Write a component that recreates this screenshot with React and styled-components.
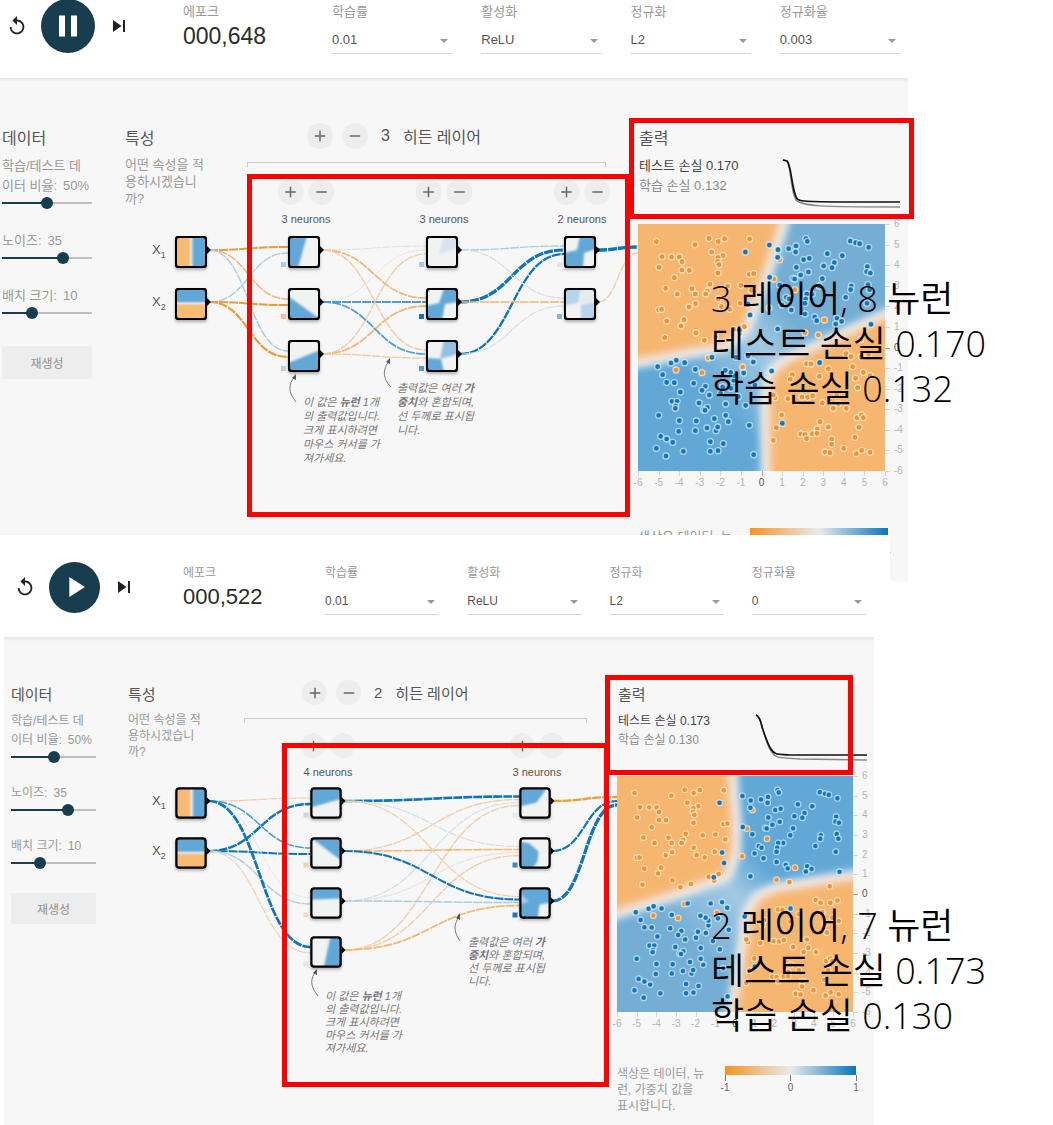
import React, { useState } from "react";
import styled, { createGlobalStyle, ThemeProvider } from "styled-components";
import {
  MdAdd,
  MdPause,
  MdPlayArrow,
  MdRemove,
  MdReplay,
  MdSkipNext,
} from "react-icons/md";

const SANS = '"Liberation Sans", "Noto Sans CJK KR", sans-serif';
const NAVY = "#183d4e";
const BLUE = "#62a8d7";
const ORANGE = "#f8bb74";
const BLANK = "#f1f2f2";

const GlobalStyle = createGlobalStyle`
  *, *::before, *::after { box-sizing: border-box; }
  body { margin: 0; background: #fff; font-family: ${SANS}; color: #555; }
  button, input, select { font-family: inherit; }
`;

/* ---------- sizes of the two captures ---------- */

const wide = {
  panel: 908,
  overlap: 0,
  headPad: "0 8px 24px 5px",
  transport: 178,
  epoch: 149,
  fieldGap: 29,
  play: 54,
  epochFont: 23,
  bodyMargin: "0",
  bodyBottom: 3,
  columns: "125px 513px minmax(0, 1fr)",
  top: 51,
  hiddenTop: 45,
  dataPad: "0 33px 0 2px",
  title: 16,
  font: 13,
  dataLine: 20,
  textLine: 17,
  sliderGap: 20,
  regenTop: 25,
  regenHeight: 33,
  round: 26,
  hiddenLeft: 122,
  hiddenPad: 60,
  bracket: 359,
  noteLine: 14,
  plot: 247,
  lossRow: 68,
  lossWidth: 118,
  outPad: 7,
  legendTop: 57,
  legendColumns: "112px 138px",
};

const narrow = {
  panel: 890,
  overlap: -47,
  headPad: "26px 24px 22px 13px",
  transport: 170,
  epoch: 142,
  fieldGap: 28,
  play: 51,
  epochFont: 22,
  bodyMargin: "0 16px 0 4px",
  bodyBottom: 12,
  columns: "124px 489px minmax(0, 1fr)",
  top: 48,
  hiddenTop: 43,
  dataPad: "0 32px 0 7px",
  title: 15,
  font: 12,
  dataLine: 19,
  textLine: 16,
  sliderGap: 19,
  regenTop: 22,
  regenHeight: 31,
  round: 25,
  hiddenLeft: 116,
  hiddenPad: 58,
  bracket: 343,
  noteLine: 13,
  plot: 236,
  lossRow: 64,
  lossWidth: 112,
  outPad: 6,
  legendTop: 54,
  legendColumns: "108px 131px",
};

/* ---------- page and panels ---------- */

const Page = styled.main`
  position: relative;
  display: flex;
  flex-direction: column;
  overflow: hidden;
`;

const Panel = styled.section`
  position: relative;
  width: 100%;
  max-width: ${({ theme }) => theme.panel}px;
  margin-top: ${({ theme }) => theme.overlap}px;
  background: #fff;
`;

const Header = styled.header`
  display: flex;
  align-items: flex-start;
  padding: ${({ theme }) => theme.headPad};
`;

const Transport = styled.div`
  display: flex;
  align-items: center;
  gap: 12px;
  height: 52px;
  flex: 0 0 ${({ theme }) => theme.transport}px;
`;

const IconButton = styled.button`
  display: grid;
  place-items: center;
  width: 24px;
  height: 24px;
  padding: 0;
  border: 0;
  background: none;
  color: #222;
  cursor: pointer;
`;

const PlayButton = styled(IconButton)`
  flex: none;
  width: ${({ theme }) => theme.play}px;
  height: ${({ theme }) => theme.play}px;
  border-radius: 50%;
  background: ${NAVY};
  color: #fff;
`;

const Epoch = styled.div`
  flex: 0 0 ${({ theme }) => theme.epoch}px;
  padding-top: 3px;
`;

const FieldLabel = styled.label`
  display: block;
  font-size: ${({ theme }) => theme.font}px;
  line-height: 18px;
  color: #999;
`;

const EpochLabel = styled(FieldLabel).attrs({ as: "div" })``;

const EpochValue = styled.div`
  font-size: ${({ theme }) => theme.epochFont}px;
  line-height: 30px;
  color: #2c2c2c;
`;

const Fields = styled.div`
  flex: 1;
  display: grid;
  grid-template-columns: repeat(4, minmax(0, 1fr));
  gap: ${({ theme }) => theme.fieldGap}px;
  padding-top: 3px;
`;

const SelectBox = styled.div`
  position: relative;
  margin-top: 5px;
  &::after {
    content: "";
    position: absolute;
    right: 4px;
    top: 13px;
    border: 4px solid transparent;
    border-top-color: #999;
    border-bottom: 0;
    pointer-events: none;
  }
`;

const Select = styled.select`
  appearance: none;
  display: block;
  width: 100%;
  height: 28px;
  padding: 0;
  border: 0;
  border-bottom: 1px solid #d4d4d4;
  border-radius: 0;
  background: none;
  font-size: ${({ theme }) => theme.font}px;
  color: #555;
`;

const Body = styled.div`
  display: grid;
  grid-template-columns: ${({ theme }) => theme.columns};
  margin: ${({ theme }) => theme.bodyMargin};
  padding-bottom: ${({ theme }) => theme.bodyBottom}px;
  background: linear-gradient(#e4e4e4, #f7f7f7 4px);
`;

const Title = styled.h2`
  margin: 0 0 7px;
  font-size: ${({ theme }) => theme.title}px;
  font-weight: 400;
  line-height: 20px;
  color: #555;
`;

/* ---------- data column ---------- */

const DataColumn = styled.div`
  padding: ${({ theme }) => theme.dataPad};
  padding-top: ${({ theme }) => theme.top}px;
`;

const Sliders = styled.div`
  display: flex;
  flex-direction: column;
  gap: ${({ theme }) => theme.sliderGap}px;
`;

const SliderLabel = styled.label`
  display: block;
  font-size: ${({ theme }) => theme.font}px;
  line-height: ${({ theme }) => theme.dataLine}px;
  color: #999;
  white-space: nowrap;
`;

const SliderValue = styled.span`
  margin-left: 6px;
`;

const Range = styled.input`
  appearance: none;
  display: block;
  width: 100%;
  height: 14px;
  margin: 0 0 1px;
  background: none;
  &::-webkit-slider-runnable-track {
    height: 2px;
    background: linear-gradient(
      to right,
      ${NAVY} ${({ $fill }) => $fill}%,
      #bfbfbf ${({ $fill }) => $fill}%
    );
  }
  &::-webkit-slider-thumb {
    appearance: none;
    width: 12px;
    height: 12px;
    margin-top: -5px;
    border-radius: 50%;
    background: ${NAVY};
  }
`;

const Regenerate = styled.button`
  display: block;
  width: 100%;
  height: ${({ theme }) => theme.regenHeight}px;
  margin-top: ${({ theme }) => theme.regenTop}px;
  padding: 0;
  border: 0;
  border-radius: 2px;
  background: #ededed;
  font-size: 12px;
  color: #8f8f8f;
`;

/* ---------- network ---------- */

const Network = styled.div`
  position: relative;
  display: flex;
  align-items: flex-start;
`;

const Features = styled.div`
  flex: 0 0 ${({ theme }) => theme.hiddenLeft}px;
  padding-top: ${({ theme }) => theme.top}px;
`;

const Text = styled.p`
  margin: 0;
  font-size: ${({ theme }) => theme.font}px;
  line-height: ${({ theme }) => theme.textLine}px;
  color: #999;
  white-space: nowrap;
`;

const Hidden = styled.div`
  flex: 0 0 ${({ theme }) => theme.bracket}px;
  padding-top: ${({ theme }) => theme.hiddenTop}px;
`;

const HiddenHead = styled.div`
  display: flex;
  align-items: center;
  gap: 13px;
  padding-left: ${({ theme }) => theme.hiddenPad}px;
  font-size: ${({ theme }) => theme.title}px;
  color: #555;
  white-space: nowrap;
`;

const Pair = styled.div`
  display: flex;
  gap: ${({ $gap }) => $gap}px;
`;

const Round = styled.button`
  display: grid;
  place-items: center;
  width: ${({ theme }) => theme.round}px;
  height: ${({ theme }) => theme.round}px;
  padding: 0;
  border: 0;
  border-radius: 50%;
  background: #ededed;
  color: #666;
`;

const Bracket = styled.div`
  height: 5px;
  margin-top: 13px;
  border: 1px solid #ccc;
  border-bottom: 0;
`;

const Diagram = styled.svg`
  position: absolute;
  left: 0;
  top: 0;
  overflow: visible;
  pointer-events: none;
  font-family: ${SANS};
`;

const LayerControls = styled.div`
  position: absolute;
  left: ${({ $x }) => $x}px;
  top: ${({ $y }) => $y}px;
  transform: translateX(-50%);
  display: flex;
  flex-direction: column;
  align-items: center;
  gap: 6px;
  font-size: 11px;
  line-height: 16px;
  color: #555;
  white-space: nowrap;
`;

const Note = styled.p`
  position: absolute;
  left: ${({ $x }) => $x}px;
  top: ${({ $y }) => $y}px;
  margin: 0;
  font-size: 11px;
  font-style: italic;
  line-height: ${({ theme }) => theme.noteLine}px;
  color: #777;
  white-space: nowrap;
`;

/* ---------- output ---------- */

const Output = styled.div`
  padding-top: ${({ theme }) => theme.top}px;
`;

const OutputTitle = styled(Title)`
  padding-left: 1px;
`;

const LossRow = styled.div`
  display: flex;
  justify-content: space-between;
  height: ${({ theme }) => theme.lossRow}px;
  padding: 0 ${({ theme }) => theme.outPad}px 0 1px;
`;

const LossLine = styled.div`
  font-size: ${({ theme }) => theme.font}px;
  line-height: ${({ theme }) => theme.dataLine}px;
  color: ${({ $strong }) => ($strong ? "#444" : "#8c8c8c")};
  white-space: nowrap;
`;

const Plot = styled.svg`
  display: block;
  overflow: visible;
  font-family: ${SANS};
`;

const Legend = styled.div`
  display: grid;
  grid-template-columns: ${({ theme }) => theme.legendColumns};
  margin-top: ${({ theme }) => theme.legendTop}px;
`;

const ScaleBar = styled.div`
  height: 9px;
  background: linear-gradient(to right, #f59322, #e8eaeb, #0877bd);
`;

const ScaleTicks = styled.div`
  display: flex;
  justify-content: space-between;
  margin: 0 -10px;
  font-size: 10px;
  line-height: 14px;
  color: #666;
`;

const ScaleTick = styled.span`
  display: flex;
  flex-direction: column;
  align-items: center;
  width: 20px;
  &::before {
    content: "";
    width: 1px;
    height: 6px;
    background: #777;
  }
`;

/* ---------- annotations ---------- */

const Mark = styled.div`
  position: absolute;
  left: ${({ $x }) => $x}px;
  top: ${({ $y }) => $y}px;
  width: ${({ $w }) => $w}px;
  height: ${({ $h }) => $h}px;
  border: 5px solid #f00;
  pointer-events: none;
`;

const Caption = styled.p`
  position: absolute;
  left: 711px;
  top: ${({ $y }) => $y}px;
  margin: 0;
  font-family: "Open Sans", "Noto Sans CJK KR", sans-serif;
  font-size: 36px;
  font-weight: 350;
  line-height: 45px;
  color: #000;
  white-space: nowrap;
`;

/* ---------- data ---------- */

const ORANGE_POINTS = [
  [79,80],[195,89],[237,70],[265,80],[284,71],[359,72],[245,111],[279,122],[264,128],[96,125],[125,126],[148,126],
  [156,140],[87,157],[156,165],[178,166],[133,188],[107,220],[142,237],[186,221],[196,237],[197,266],[177,276],[86,284],
  [95,283],[162,314],[110,318],[153,333],[198,354],[104,368],[223,376],[263,140],[267,149],[264,174],[240,208],[232,228],
  [227,237],[293,213],[333,211],[364,226],[265,252],[274,275],[299,283],[331,265],[358,178],[371,176],[432,192],[449,134],
  [495,224],[417,279],[343,335],[312,343],[329,355],[256,366],[525,353],[565,360],[583,315],[692,373],[235,429],[138,465],
  [216,473],[338,456],[487,479],[481,493],[530,446],[543,447],[568,484],[595,461],[648,416],[663,425],[694,425],[716,418],
  [668,455],[700,472],[720,482],[677,490],[683,518],[435,548],[430,540],[474,551],[516,546],[533,547],[548,542],[577,564],
  [610,580],[620,540],[625,566],[649,580],[455,600],[439,638],[430,676],[512,657],[525,659],[530,671],[547,656],[562,642],
  [561,655],[570,620],[595,636],[605,672],[605,688],[585,711],[600,713],[641,700],[675,667],[681,608],[694,600],[700,608],
  [687,637],[679,716],[695,706],[720,712],
];

const BLUE_POINTS = [
  [346,111],[418,90],[444,104],[443,127],[476,101],[498,93],[497,111],[528,71],[532,79],[521,134],[538,130],[499,157],
  [535,171],[512,180],[489,190],[494,192],[419,187],[449,210],[592,116],[637,122],[613,143],[606,158],[581,153],[577,191],
  [568,213],[661,78],[677,83],[689,86],[716,97],[712,155],[710,170],[721,174],[714,209],[719,224],[664,213],[662,224],
  [647,247],[711,265],[546,237],[530,237],[527,252],[525,265],[469,247],[478,252],[456,270],[484,285],[525,297],[554,306],
  [560,317],[621,310],[635,319],[617,327],[723,328],[443,342],[354,267],[360,300],[328,345],[83,455],[123,444],[139,436],
  [164,443],[98,479],[110,502],[133,503],[196,463],[191,505],[226,514],[216,526],[151,531],[238,540],[126,559],[141,559],
  [137,573],[136,580],[207,564],[232,577],[221,584],[225,586],[86,601],[148,617],[199,618],[253,611],[287,601],[295,620],
  [287,567],[272,535],[278,516],[303,520],[311,496],[311,481],[302,472],[286,466],[246,427],[318,427],[354,423],[370,441],
  [341,474],[375,510],[325,545],[347,571],[358,631],[231,639],[258,647],[263,636],[196,647],[146,649],[92,664],[110,672],
  [128,682],[79,700],[108,723],[160,709],[241,680],[280,686],[241,709],[264,707],[371,719],[425,468],[569,443],[457,625],
];

const C = {
  B: "#0f74b8",
  b: "#4f9dcf",
  l: "#a9cce2",
  p: "#d0dfe8",
  O: "#f09a38",
  o: "#f1b878",
  q: "#efcfab",
  r: "#ece0d3",
  g: "#e3e6e8",
};

/* Links are [from, to, width, colour]; each entry of `links` joins one column to the next. */
const first = {
  id: "first",
  epoch: "000,648",
  running: true,
  fields: [["학습률", "0.01"], ["활성화", "ReLU"], ["정규화", "L2"], ["정규화율", "0.003"]],
  layers: 3,
  test: "0.170",
  train: "0.132",
  node: 32,
  columns: [66, 179, 317, 455],
  rows: [174, 226, 278],
  outX: 513,
  controlsY: 101,
  nodes: [
    ["x1", "x2"],
    [
      [["0,0 19,0 10,32 0,32", BLUE]],
      [["0,8 32,31 32,34 0,34", BLUE]],
      [["0,23 32,10 32,32 0,32", BLUE]],
    ],
    [
      [["18,0 32,0 32,12 13,18", "#d5e4ef"]],
      [["18,0 32,0 32,14 19,16 16,32 0,32 0,18 13,15", BLUE]],
      [["18,0 32,0 32,14 14,19", "#93c1e1"], ["0,18 15,19 18,32 0,32", BLUE]],
    ],
    [
      [["16,0 32,0 32,13 20,17 19,32 0,32 0,17 13,14", BLUE]],
      [["0,0 17,0 14,15 0,18", "#b7d4ea"], ["18,0 32,0 32,12 16,17", "#e3eaf0"], ["17,17 32,14 32,32 17,32", "#b7d4ea"]],
    ],
  ],
  biases: [["#a9cce2", "#f1c38f", "#b4d2e4"], ["#a9cce2", "#0f74b8", "#4f9dcf"], ["#e3e6e8", "#86b8da"]],
  links: [
    [[0, 0, 2, "O"], [1, 0, 1.3, "l"], [0, 1, 1.5, "o"], [1, 1, 2, "O"], [0, 2, 1.4, "l"], [1, 2, 2.2, "O"]],
    [
      [0, 0, 1.2, "r"], [1, 0, 1, "g"], [2, 0, 1.4, "q"], [0, 1, 1.7, "o"], [1, 1, 2, "b"],
      [2, 1, 1.8, "o"], [0, 2, 1.4, "q"], [1, 2, 1.7, "b"], [2, 2, 1.5, "q"],
    ],
    [[0, 0, 1.4, "l"], [1, 0, 3.2, "B"], [2, 0, 2.3, "B"], [0, 1, 1.2, "p"], [1, 1, 1.6, "o"], [2, 1, 1.1, "p"]],
    [[0, 0, 3.4, "B"], [1, 0, 1.4, "q"]],
  ],
  notes: [
    { x: 178, y: 317, arrow: "M171 324 C163 314 163 307 170 298", head: "171,296 167,300 171,302", kind: "neuron" },
    { x: 272, y: 303, arrow: "M266 309 C257 300 258 291 264 283", head: "265,280 261,284 265,286", kind: "weight" },
  ],
  regions: {
    upper: BLUE,
    shade: "#74aed5",
    a: "-60,-60 154,-60 145,0 125,61 108,105 88,122 0,138 -60,147",
    b: "307,70 247,91 150,135 133,148 128,170 128,200 130,307 307,307",
  },
  loss: {
    test: "M0 4 L4 5 C9 9 9 43 16 44 C22 46 34 46 117 46",
    train: "M0 4 L4 5 C8 9 8 41 14 45 C22 50 34 51 117 51",
  },
};

const second = {
  id: "second",
  epoch: "000,522",
  running: false,
  fields: [["학습률", "0.01"], ["활성화", "ReLU"], ["정규화", "L2"], ["정규화율", "0"]],
  layers: 2,
  test: "0.173",
  train: "0.130",
  node: 31,
  columns: [63, 198, 407],
  rows: [166, 216, 266, 315],
  outX: 489,
  controlsY: 96,
  nodes: [
    ["x1", "x2"],
    [
      [["0,0 32,0 32,11 0,20", BLUE]],
      [["0,0 32,0 32,24", BLUE]],
      [["0,0 32,0 32,11 0,12", BLUE]],
      [["20,0 32,0 32,32 13,32", BLUE]],
    ],
    [
      [["0,0 28,0 17,15 0,19", BLUE]],
      [["0,4 10,6 19,14 18,24 12,32 0,32", BLUE]],
      [["0,0 32,0 32,15 20,17 18,32 0,32", BLUE], ["0,5 9,14 0,17", "#a7cce5"]],
    ],
  ],
  biases: [["#c5dae7", "#f0d3b0", "#eddcc8", "#e3e3e3"], ["#e8e8e8", "#3b8ac0", "#1b78b8"]],
  links: [
    [
      [0, 0, 1.2, "q"], [1, 0, 2.4, "B"], [0, 1, 1.6, "b"], [1, 1, 2, "B"],
      [0, 2, 1, "g"], [1, 2, 1.3, "l"], [0, 3, 2.7, "B"], [1, 3, 1.1, "q"],
    ],
    [
      [0, 0, 2.6, "B"], [1, 0, 1.4, "q"], [2, 0, 1.2, "p"], [3, 0, 1.4, "q"],
      [0, 1, 1.2, "p"], [1, 1, 1.6, "o"], [2, 1, 1.1, "r"], [3, 1, 1.4, "q"],
      [0, 2, 1.2, "q"], [1, 2, 2.1, "B"], [2, 2, 1.5, "l"], [3, 2, 1.8, "o"],
    ],
    [[0, 0, 2.3, "O"], [1, 0, 2.2, "B"], [2, 0, 3.2, "B"]],
  ],
  notes: [
    { x: 197, y: 353, arrow: "M190 359 C182 349 182 342 188 334", head: "189,332 185,336 189,338", kind: "neuron" },
    { x: 340, y: 299, arrow: "M332 304 C325 294 326 287 331 280", head: "332,276 328,281 332,283", kind: "weight" },
  ],
  regions: {
    upper: "#74aed5",
    shade: BLUE,
    a: "-60,-60 114,-60 115,0 119,50 118,78 110,100 66,116 0,137 -60,156",
    b: "296,90 236,100 160,112 140,121 130,140 126,170 122,195 115,236 108,296 296,296",
  },
  loss: {
    test: "M0 3 C5 5 5 13 7 18 C10 27 12 33 15 37 C19 44 24 42 34 43 L111 43",
    train: "M0 3 C5 5 5 13 7 18 C10 27 12 35 15 39 C20 48 26 45 44 47 L111 48",
  },
};

/* ---------- parts ---------- */

function Field({ id, label, value }) {
  return (
    <div>
      <FieldLabel htmlFor={id}>{label}</FieldLabel>
      <SelectBox>
        <Select id={id} defaultValue={value}>
          <option>{value}</option>
        </Select>
      </SelectBox>
    </div>
  );
}

function Slider({ id, label, unit = "", min, max, initial }) {
  const [value, setValue] = useState(initial);
  return (
    <div>
      <SliderLabel htmlFor={id}>
        {label}
        <SliderValue>{value}{unit}</SliderValue>
      </SliderLabel>
      <Range
        id={id}
        type="range"
        min={min}
        max={max}
        value={value}
        $fill={((value - min) / (max - min)) * 100}
        onChange={(event) => setValue(Number(event.target.value))}
      />
    </div>
  );
}

function PlusMinus({ gap, what }) {
  return (
    <Pair $gap={gap}>
      <Round type="button" aria-label={`${what} +`}><MdAdd size={18} /></Round>
      <Round type="button" aria-label={`${what} −`}><MdRemove size={18} /></Round>
    </Pair>
  );
}

function NodeBox({ id, cx, cy, size, art }) {
  const x = cx - size / 2;
  const y = cy - size / 2;
  const clip = `${id}-clip`;
  return (
    <g transform={`translate(${x} ${y})`}>
      <clipPath id={clip}><rect x="1" y="1" width={size - 2} height={size - 2} rx="2" /></clipPath>
      <rect width={size} height={size} rx="3" fill="#000" filter="url(#node-shadow)" />
      <g clipPath={`url(#${clip})`}>
        {typeof art === "string" ? (
          <rect width="32" height="32" fill={`url(#fill-${art})`} />
        ) : (
          <>
            <rect width="32" height="32" fill={BLANK} />
            <g filter="url(#node-blur)">
              {art.map(([points, fill]) => <polygon key={points} points={points} fill={fill} />)}
            </g>
          </>
        )}
      </g>
      <rect x="1" y="1" width={size - 2} height={size - 2} rx="3" fill="none" stroke="#000" strokeWidth="2" />
      <path d={`M${size} ${size / 2 - 6} l4 4 l-4 4 z`} fill="#000" />
    </g>
  );
}

function NetworkDiagram({ net }) {
  const half = net.node / 2;
  return (
    <Diagram width={net.outX} height="340" role="img" aria-label="신경망">
      <defs>
        <linearGradient id="fill-x1">
          <stop offset="0.42" stopColor={ORANGE} />
          <stop offset="0.5" stopColor="#e8e4dd" />
          <stop offset="0.6" stopColor={BLUE} />
        </linearGradient>
        <linearGradient id="fill-x2" x2="0" y2="1">
          <stop offset="0.4" stopColor={BLUE} />
          <stop offset="0.48" stopColor="#e8e4dd" />
          <stop offset="0.56" stopColor={ORANGE} />
        </linearGradient>
        <filter id="node-blur" x="-20%" y="-20%" width="140%" height="140%"><feGaussianBlur stdDeviation="0.9" /></filter>
        <filter id="node-shadow" x="-30%" y="-30%" width="160%" height="160%">
          <feDropShadow dx="0" dy="2" stdDeviation="1.5" floodOpacity="0.3" />
        </filter>
      </defs>
      {net.links.map((links, stage) =>
        links.map(([from, to, width, tone]) => {
          const last = stage === net.links.length - 1;
          const count = net.nodes[stage].length;
          const x1 = net.columns[stage] + half + 2;
          const x2 = last ? net.outX : net.columns[stage + 1] - half;
          const y1 = net.rows[from] - 2;
          const y2 = net.rows[to] - 2 + ((from - (count - 1) / 2) / count) * 12;
          const mid = (x1 + x2) / 2;
          return (
            <path
              key={`${stage}-${from}-${to}`}
              d={`M${x1} ${y1} C${mid} ${y1} ${mid} ${y2} ${x2} ${y2}`}
              fill="none"
              stroke={C[tone]}
              strokeWidth={width}
              strokeDasharray="9 1"
            />
          );
        })
      )}
      {net.nodes.map((layer, column) =>
        layer.map((art, row) => (
          <NodeBox
            key={`${column}-${row}`}
            id={`${net.id}-${column}-${row}`}
            cx={net.columns[column]}
            cy={net.rows[row]}
            size={net.node}
            art={art}
          />
        ))
      )}
      {net.biases.map((layer, column) =>
        layer.map((fill, row) => (
          <rect
            key={`${column}-${row}`}
            x={net.columns[column + 1] - half - 7}
            y={net.rows[row] + half - 6}
            width="5"
            height="5"
            fill={fill}
          />
        ))
      )}
      {[0, 1].map((row) => (
        <text key={row} x={net.columns[0] - 39} y={net.rows[row] + 2} fontSize="13" fill="#555">
          X<tspan fontSize="9" dy="4">{row + 1}</tspan>
        </text>
      ))}
      {net.notes.map((note) => (
        <g key={note.kind}>
          <path d={note.arrow} fill="none" stroke="#777" />
          <polygon points={note.head} fill="#555" />
        </g>
      ))}
    </Diagram>
  );
}

function NoteText({ kind }) {
  return kind === "neuron" ? (
    <>이 값은 <b>뉴런</b> 1개<br />의 출력값입니다.<br />크게 표시하려면<br />마우스 커서를 가<br />져가세요.</>
  ) : (
    <>출력값은 여러 <b>가</b><br /><b>중치</b>와 혼합되며,<br />선 두께로 표시됩<br />니다.</>
  );
}

const TICKS = [-6, -5, -4, -3, -2, -1, 0, 1, 2, 3, 4, 5, 6];

function Heatmap({ id, size, regions }) {
  const at = (value) => ((value + 6) / 12) * size;
  const dots = (points, fill) =>
    points.map(([x, y]) => <circle key={`${x}-${y}`} cx={x} cy={y} r="9" fill={fill} />);
  return (
    <Plot width={size} height={size} role="img" aria-label="출력">
      <defs>
        <clipPath id={`${id}-plot`}><rect width={size} height={size} /></clipPath>
        <linearGradient id={`${id}-base`} x1="0" y1="1" x2="1" y2="0">
          <stop offset="0.3" stopColor={regions.upper} />
          <stop offset="0.5" stopColor="#a3c9e2" />
          <stop offset="0.62" stopColor={regions.shade} />
        </linearGradient>
        <filter id={`${id}-halo`} filterUnits="userSpaceOnUse" x="-90" y="-90" width="430" height="430">
          <feGaussianBlur stdDeviation="5" />
        </filter>
        <filter id={`${id}-soft`} filterUnits="userSpaceOnUse" x="-90" y="-90" width="430" height="430">
          <feGaussianBlur stdDeviation="4" />
        </filter>
      </defs>
      <g clipPath={`url(#${id}-plot)`}>
        <rect width={size} height={size} fill={`url(#${id}-base)`} />
        <g fill="#efefef" stroke="#efefef" strokeWidth="8" filter={`url(#${id}-halo)`}>
          <polygon points={regions.a} />
          <polygon points={regions.b} />
        </g>
        <g fill="#f6b670" stroke="#f1ebe4" strokeWidth="6" filter={`url(#${id}-soft)`}>
          <polygon points={regions.a} />
          <polygon points={regions.b} />
        </g>
        <svg viewBox="24 27 741 741" width={size} height={size}>
          <g stroke="#fff" strokeOpacity="0.6" strokeWidth="4">
            {dots(ORANGE_POINTS, "#f0922d")}
            {dots(BLUE_POINTS, "#1277ba")}
          </g>
        </svg>
      </g>
      <g fontSize="10" stroke="none">
        {TICKS.map((tick) => (
          <g key={tick} fill={tick === 0 ? "#555" : "#b5b5b5"}>
            <rect x={Math.round(at(tick))} y={size} width="1" height="5" fillOpacity="0.5" />
            <text x={at(tick)} y={size + 15} textAnchor="middle">{tick}</text>
            <rect x={size} y={Math.round(at(-tick))} width="5" height="1" fillOpacity="0.5" />
            <text x={size + 9} y={at(-tick) + 3}>{tick}</text>
          </g>
        ))}
      </g>
    </Plot>
  );
}

function Playground({ net, sizes }) {
  return (
    <ThemeProvider theme={sizes}>
      <Panel>
        <Header>
          <Transport>
            <IconButton type="button" aria-label="초기화"><MdReplay size={22} /></IconButton>
            <PlayButton type="button" aria-label="실행/일시중지">
              {net.running ? <MdPause size={36} /> : <MdPlayArrow size={34} />}
            </PlayButton>
            <IconButton type="button" aria-label="단계"><MdSkipNext size={24} /></IconButton>
          </Transport>
          <Epoch>
            <EpochLabel>에포크</EpochLabel>
            <EpochValue>{net.epoch}</EpochValue>
          </Epoch>
          <Fields>
            {net.fields.map(([label, value]) => (
              <Field key={label} id={`${net.id}-${label}`} label={label} value={value} />
            ))}
          </Fields>
        </Header>
        <Body>
          <DataColumn>
            <Title>데이터</Title>
            <Sliders>
              <Slider id={`${net.id}-ratio`} label={<>학습/테스트 데<br />이터 비율:</>} unit="%" min={10} max={90} initial={50} />
              <Slider id={`${net.id}-noise`} label="노이즈:" min={0} max={50} initial={35} />
              <Slider id={`${net.id}-batch`} label="배치 크기:" min={1} max={30} initial={10} />
            </Sliders>
            <Regenerate type="button">재생성</Regenerate>
          </DataColumn>
          <Network>
            <Features>
              <Title>특성</Title>
              <Text>어떤 속성을 적<br />용하시겠습니<br />까?</Text>
            </Features>
            <Hidden>
              <HiddenHead>
                <PlusMinus gap={9} what="레이어" />
                <span>{net.layers}</span>
                <span>히든 레이어</span>
              </HiddenHead>
              <Bracket />
            </Hidden>
            <NetworkDiagram net={net} />
            {net.nodes.slice(1).map((layer, index) => (
              <LayerControls key={index} $x={net.columns[index + 1] + 2} $y={net.controlsY}>
                <PlusMinus gap={5} what="뉴런" />
                <span>{layer.length} neurons</span>
              </LayerControls>
            ))}
            {net.notes.map((note) => (
              <Note key={note.kind} $x={note.x} $y={note.y}><NoteText kind={note.kind} /></Note>
            ))}
          </Network>
          <Output>
            <OutputTitle>출력</OutputTitle>
            <LossRow>
              <div>
                <LossLine $strong>테스트 손실 {net.test}</LossLine>
                <LossLine>학습 손실 {net.train}</LossLine>
              </div>
              <Plot width={sizes.lossWidth} height="60" role="img" aria-label="손실">
                <path d={net.loss.train} fill="none" stroke="#888" strokeWidth="1.5" />
                <path d={net.loss.test} fill="none" stroke="#111" strokeWidth="1.7" />
              </Plot>
            </LossRow>
            <Heatmap id={net.id} size={sizes.plot} regions={net.regions} />
            <Legend>
              <Text>색상은 데이터, 뉴<br />런, 가중치 값을<br />표시합니다.</Text>
              <div>
                <ScaleBar />
                <ScaleTicks>
                  <ScaleTick>-1</ScaleTick>
                  <ScaleTick>0</ScaleTick>
                  <ScaleTick>1</ScaleTick>
                </ScaleTicks>
              </div>
            </Legend>
          </Output>
        </Body>
      </Panel>
    </ThemeProvider>
  );
}

export default function App() {
  return (
    <Page>
      <GlobalStyle />
      <Playground net={first} sizes={wide} />
      <Playground net={second} sizes={narrow} />
      <Mark $x={247} $y={174} $w={383} $h={343} />
      <Mark $x={629} $y={118} $w={285} $h={101} />
      <Mark $x={282} $y={743} $w={327} $h={344} />
      <Mark $x={605} $y={675} $w={248} $h={100} />
      <Caption $y={276}>3 레이어, 8 뉴런<br />테스트 손실 0.170<br />학습 손실 0.132</Caption>
      <Caption $y={903}>2 레이어, 7 뉴런<br />테스트 손실 0.173<br />학습 손실 0.130</Caption>
    </Page>
  );
}
